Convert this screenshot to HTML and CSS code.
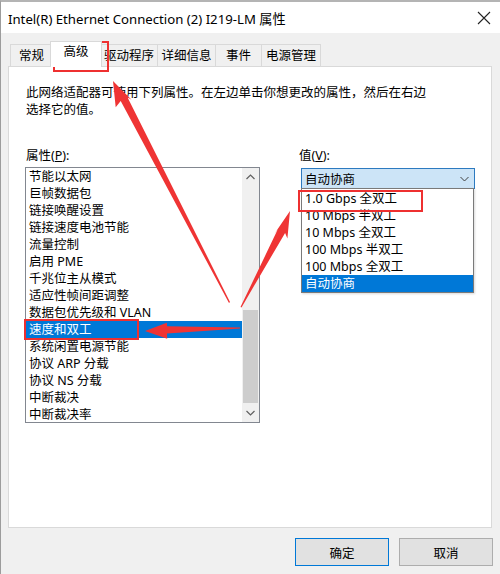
FILE: index.html
```html
<!DOCTYPE html>
<html lang="zh-CN">
<head>
    <meta charset="UTF-8">
    <meta name="viewport" content="width=device-width, initial-scale=1.0">
    <title>Intel(R) Ethernet Connection (2) I219-LM 属性</title>
    <link rel="stylesheet" href="styles.css">
</head>
<body>
    <div class="window">
        <div class="titlebar">
            <span class="title">Intel(R) Ethernet Connection (2) I219-LM 属性</span>
            <svg class="close" width="14" height="14" viewBox="0 0 14 14">
                <path d="M1 1 L13 13 M13 1 L1 13" stroke="#222" stroke-width="1.1" fill="none"/>
            </svg>
        </div>

        <div class="tabs">
            <div class="tab tab-general">常规</div>
            <div class="tab tab-advanced active">高级</div>
            <div class="tab tab-driver">驱动程序</div>
            <div class="tab tab-details">详细信息</div>
            <div class="tab tab-events">事件</div>
            <div class="tab tab-power">电源管理</div>
        </div>

        <div class="panel">
            <p class="desc">此网络适配器可使用下列属性。在左边单击你想更改的属性，然后在右边<br>选择它的值。</p>

            <div class="fields">
                <div class="field-left">
                    <div class="label">属性(<u>P</u>):</div>
                    <div class="listbox">
                        <ul class="items">
                            <li>节能以太网</li>
                            <li>巨帧数据包</li>
                            <li>链接唤醒设置</li>
                            <li>链接速度电池节能</li>
                            <li>流量控制</li>
                            <li>启用 PME</li>
                            <li>千兆位主从模式</li>
                            <li>适应性帧间距调整</li>
                            <li>数据包优先级和 VLAN</li>
                            <li class="selected">速度和双工</li>
                            <li>系统闲置电源节能</li>
                            <li>协议 ARP 分载</li>
                            <li>协议 NS 分载</li>
                            <li>中断裁决</li>
                            <li>中断裁决率</li>
                        </ul>
                        <div class="scrollbar">
                            <svg class="sb-arrow" width="9" height="6" viewBox="0 0 9 6"><path d="M0.5 5 L4.5 1 L8.5 5" stroke="#606060" stroke-width="1.2" fill="none"/></svg>
                            <div class="sb-track"><div class="sb-thumb"></div></div>
                            <svg class="sb-arrow" width="9" height="6" viewBox="0 0 9 6"><path d="M0.5 1 L4.5 5 L8.5 1" stroke="#606060" stroke-width="1.2" fill="none"/></svg>
                        </div>
                    </div>
                </div>

                <div class="field-right">
                    <div class="label">值(<u>V</u>):</div>
                    <div class="combo">
                        <span>自动协商</span>
                        <svg width="9" height="6" viewBox="0 0 9 6"><path d="M0.5 1 L4.5 5 L8.5 1" stroke="#404040" stroke-width="1" fill="none"/></svg>
                        <ul class="dropdown">
                            <li>1.0 Gbps 全双工</li>
                            <li>10 Mbps 半双工</li>
                            <li>10 Mbps 全双工</li>
                            <li>100 Mbps 半双工</li>
                            <li>100 Mbps 全双工</li>
                            <li class="selected">自动协商</li>
                        </ul>
                    </div>
                </div>
            </div>
        </div>

        <div class="buttons">
            <button class="btn default">确定</button>
            <button class="btn">取消</button>
        </div>

        <!-- annotations drawn over the screenshot -->
        <div class="mark mark-tab"></div>
        <div class="mark mark-speed"></div>
        <div class="mark mark-gbps"></div>
        <svg class="arrows" width="500" height="574" viewBox="0 0 500 574">
            <polygon points="230,302 127.6,97.4 131.5,99.8 113,81 115.7,107.3 120.7,101.1 229,303"/>
            <polygon points="240,327.6 167.1,326.2 166.8,322.8 145,331 167.2,338.8 167.0,333.4 240,328.6"/>
            <polygon points="240.5,307 277.7,229.6 274.3,233.9 290,211 287.4,238.6 285.1,232.9 241.5,307.4"/>
        </svg>
    </div>
</body>
</html>
```

FILE: styles.css
```css
* {
    box-sizing: border-box;
}

body {
    margin: 0;
    background-color: #f0f0f0;
    font-family: "Noto Sans", "Noto Sans CJK SC", sans-serif;
    color: #000;
}

.window {
    position: relative;
    width: 500px;
    height: 574px;
    overflow: hidden;
    background-color: #f0f0f0;
    border-top: 2px solid #b4b4b4;
    border-left: 1px solid #9c9c9c;
}

.titlebar {
    display: flex;
    align-items: center;
    justify-content: space-between;
    height: 31px;
    padding: 1px 9px 0 7px;
    background-color: #fff;
}

.title {
    font-size: 13.2px;
}

/* tabs */
.tabs {
    display: flex;
    align-items: flex-end;
    height: 33px;
    padding-left: 2px;
    margin-left: 7px;
}

.tab {
    height: 22px;
    line-height: 21px;
    font-size: 12.5px;
    text-align: center;
    background-color: #f0f0f0;
    border: 1px solid #d9d9d9;
    border-bottom: none;
    margin-right: -1px;
}

.tab-general { width: 43px; }
.tab-driver { width: 58px; }
.tab-details { width: 59px; }
.tab-events { width: 47px; }
.tab-power { width: 60px; }

.tab.active {
    position: relative;
    z-index: 1;
    width: 52px;
    height: 26px;
    margin: 0 -2px -1px -2px;
    padding-bottom: 4px;
    line-height: 20px;
    background-color: #fff;
}

/* panel */
.panel {
    height: 462px;
    margin: 0 8px 0 7px;
    padding: 17px 16px 0 16px;
    background-color: #fff;
    border: 1px solid #d9d9d9;
}

.desc {
    margin: 0 0 0 1px;
    font-size: 12.5px;
    line-height: 17px;
}

.fields {
    display: grid;
    grid-template-columns: 235px 178px;
    column-gap: 38px;
    margin-top: 30px;
}

.label {
    height: 19px;
    padding-left: 1px;
    font-size: 12.5px;
    line-height: 16px;
}

.listbox {
    display: flex;
    height: 256px;
    border: 1px solid #828790;
}

.items,
.dropdown {
    list-style: none;
    margin: 0;
    padding: 0;
}

.items {
    flex: 1;
}

.items li,
.dropdown li {
    height: 17px;
    padding-left: 3px;
    font-size: 12.5px;
    line-height: 17px;
    white-space: nowrap;
}

.items li.selected,
.dropdown li.selected {
    background-color: #0078d7;
    color: #fff;
}

.scrollbar {
    display: flex;
    flex-direction: column;
    align-items: center;
    width: 17px;
    background-color: #f0f0f0;
}

.sb-arrow {
    flex: none;
    margin: 6px 0;
}

.sb-track {
    flex: 1;
    width: 100%;
    padding: 124px 1px 0 1px;
}

.sb-thumb {
    height: 93px;
    background-color: #cdcdcd;
}

/* combo and its open list */
.combo {
    position: relative;
    display: flex;
    align-items: center;
    justify-content: space-between;
    height: 21px;
    margin: 1px 0 0 3px;
    width: 174px;
    padding: 0 5px 0 3px;
    font-size: 12.5px;
    background-color: #cce4f7;
    border: 1px solid #2c7ac0;
}

.dropdown {
    position: absolute;
    top: 19px;
    left: -1px;
    width: 173px;
    padding-top: 1px;
    background-color: #fff;
    border: 1px solid #7a7a7a;
    box-shadow: 1px 1px 2px rgba(0, 0, 0, 0.15);
}

/* buttons */
.buttons {
    display: flex;
    justify-content: flex-end;
    gap: 10px;
    padding: 10px 7px 0 0;
}

.btn {
    width: 94px;
    height: 28px;
    font-family: inherit;
    font-size: 12.5px;
    background-color: #e1e1e1;
    border: 1px solid #adadad;
}

.btn.default {
    border-color: #0078d7;
}

/* red annotations */
.mark {
    position: absolute;
    border: 2px solid #ee3030;
}

.mark-tab {
    left: 52px;
    top: 39px;
    width: 56px;
    height: 31px;
}

.mark-speed {
    left: 23px;
    top: 317px;
    width: 115px;
    height: 21px;
}

.mark-gbps {
    left: 297px;
    top: 188px;
    width: 125px;
    height: 22px;
}

.arrows {
    position: absolute;
    top: -2px;
    left: -1px;
    fill: #ef3434;
    pointer-events: none;
}
```
